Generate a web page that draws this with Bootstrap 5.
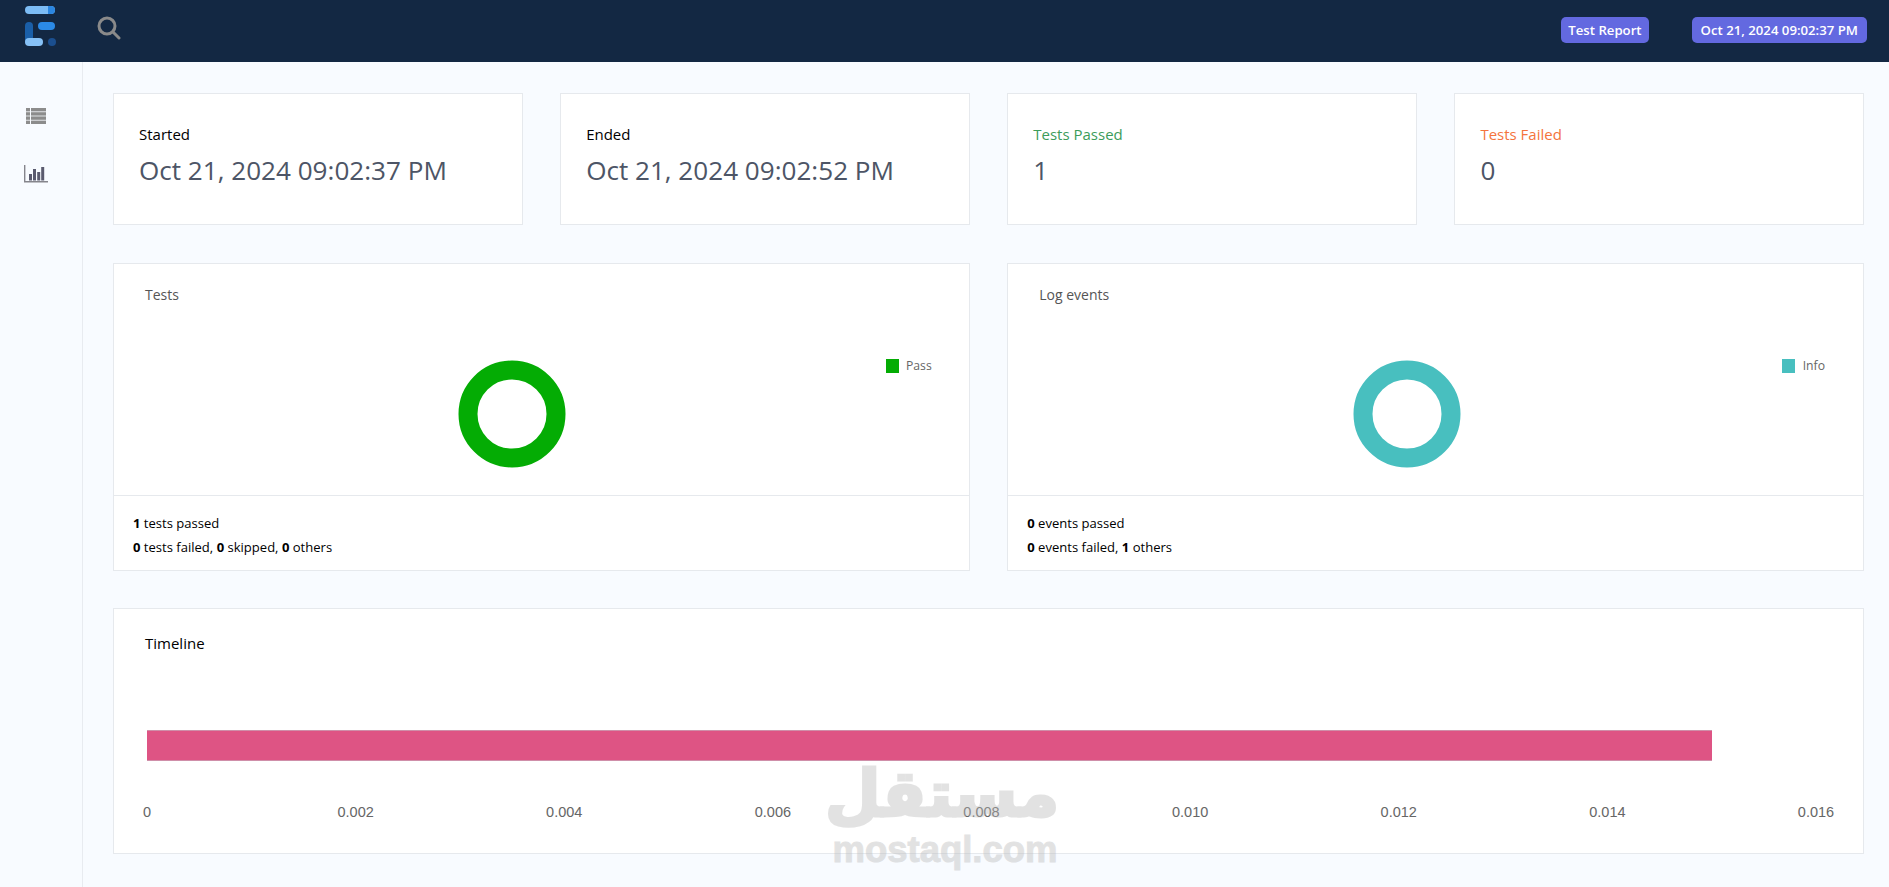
<!DOCTYPE html>
<html lang="en">
<head>
  <meta charset="utf-8" />
  <meta name="viewport" content="width=device-width, initial-scale=1.0" />
  <title>Test Report</title>
  <link href="https://cdn.jsdelivr.net/npm/bootstrap@5.3.2/dist/css/bootstrap.min.css" rel="stylesheet" />
  <style>
    body {
      background-color: #f8fbff;
      font-family: "Open Sans", sans-serif;
      color: #000;
      height: 887px;
      overflow: hidden;
    }

    .top-bar {
      height: 62px;
      background-color: #132843;
      padding: 0 22px 0 25px;
    }

    .top-bar .logo-svg {
      margin-top: -8px;
    }

    .top-bar .search-svg {
      margin-left: 40px;
      margin-top: -7px;
    }

    .top-pill {
      background-color: #6369e0;
      border-radius: 5px;
      font-size: 13.2px;
      font-weight: 600;
      line-height: 26px;
      padding: 0 9px;
      margin-top: -2px;
      margin-left: 42px;
      color: #fff;
    }

    .top-pill.pill-short {
      padding: 0 7px;
      margin-right: 1px;
    }

    .side-bar {
      width: 83px;
      height: 825px;
      border-right: 1px solid #e8ebf0;
      padding: 46px 11px 0 0;
      gap: 41px;
    }

    .report-main {
      padding: 31px 25px 0 30px;
    }

    .report-row {
      --bs-gutter-x: 37.5px;
      --bs-gutter-y: 37.5px;
    }

    .report-card {
      --bs-card-border-color: #e6e9ed;
      border-radius: 0;
    }

    .stat-card {
      height: 132px;
      padding: 29px 25px 0;
    }

    .stat-label {
      font-size: 15px;
      line-height: 22px;
    }

    .stat-value {
      font-size: 26.1px;
      line-height: 36px;
      margin-top: 7px;
      color: #4d5566;
    }

    .text-passed { color: #3c9c5a; }
    .text-failed { color: #f4743c; }

    .chart-body {
      height: 231px;
      padding: 21px 37px 0 0;
    }

    .chart-title {
      font-size: 14px;
      line-height: 20px;
      color: #555;
      padding-left: 31px;
      margin-bottom: 53px;
    }

    .donut-svg {
      margin-left: 344px;
      margin-top: 2px;
    }

    .donut-svg.donut-log {
      margin-left: 345px;
    }

    .legend-box {
      font-size: 12.2px;
      line-height: 14px;
      color: #666;
      gap: 7px;
      margin-top: 1px;
    }

    .legend-box.legend-log {
      gap: 8px;
      margin-right: 1px;
    }

    .legend-box i {
      display: block;
      width: 13px;
      height: 14px;
    }

    .chart-foot {
      --bs-card-cap-bg: #fff;
      --bs-card-cap-padding-x: 19px;
      --bs-card-cap-padding-y: 0;
      height: 75px;
      padding-top: 15px;
      border-radius: 0 !important;
      font-size: 13.05px;
      line-height: 24px;
    }

    .timeline-card {
      height: 246px;
    }

    .timeline-title {
      font-size: 15px;
      line-height: 22px;
      padding: 23px 0 0 31px;
      margin-bottom: 76px;
    }

    .timeline-plot {
      padding: 0 47px 0 33px;
    }

    .timeline-bar {
      height: 31px;
      background-color: #de5484;
      border-top: 1px solid #cf8fa9;
      border-bottom: 1px solid #cf8fa9;
    }

    .timeline-ticks {
      margin-top: 41px;
      font-family: "Liberation Sans", Arial, sans-serif;
      font-size: 14.5px;
      line-height: 20px;
      color: #666;
    }

    .timeline-ticks span {
      width: 0;
      display: flex;
      justify-content: center;
      white-space: nowrap;
    }

    /* filigrane mostaql par dessus la page */
    .wm-mark {
      position: absolute;
      left: 831px;
      top: 752px;
      width: 228px;
      color: #b9b9b9;
      opacity: 0.4;
      text-align: center;
      font-weight: 700;
      pointer-events: none;
    }

    .wm-ar {
      font-family: "DejaVu Sans", sans-serif;
      font-size: 64px;
      line-height: 84px;
      padding-right: 0;
      padding-left: 10px;
      -webkit-text-stroke: 3px #b9b9b9;
    }

    .wm-en {
      font-family: "Liberation Sans", Arial, sans-serif;
      font-size: 36.5px;
      line-height: 36px;
      margin-top: -4px;
      -webkit-text-stroke: 1px #b9b9b9;
    }
  </style>
</head>
<body>
  <!-- barre du haut -->
  <nav class="top-bar d-flex align-items-center">
    <svg class="logo-svg" width="32" height="42" viewBox="0 0 32 42">
      <rect x="0" y="0" width="30" height="8" rx="4" fill="#7cbcf5" />
      <path d="M23 0h3a4 4 0 0 1 0 8h-3z" fill="#2b86e0" />
      <rect x="13" y="16" width="17" height="8" rx="4" fill="#2b8ae6" />
      <rect x="0" y="16" width="8" height="22" rx="4" fill="#1a5fa8" />
      <rect x="0" y="32" width="18" height="8" rx="4" fill="#86c1f6" />
      <circle cx="27" cy="36" r="4" fill="#1b4f8f" />
    </svg>
    <svg class="search-svg" width="24" height="24" viewBox="0 0 24 24" fill="none" stroke="#8a8a8a" stroke-width="3">
      <circle cx="10" cy="10" r="8" />
      <path d="M16 16l6 6" stroke-linecap="round" />
    </svg>
    <span class="ms-auto top-pill pill-short">Test Report</span>
    <span class="top-pill">Oct 21, 2024 09:02:37 PM</span>
  </nav>

  <div class="d-flex">
    <aside class="side-bar d-flex flex-column align-items-center flex-shrink-0">
      <svg width="20" height="16" viewBox="0 0 20 16" fill="#8c8c8c">
        <rect x="0" y="0" width="4" height="3.4" />
        <rect x="5" y="0" width="15" height="3.4" />
        <rect x="0" y="4.2" width="4" height="3.4" />
        <rect x="5" y="4.2" width="15" height="3.4" />
        <rect x="0" y="8.4" width="4" height="3.4" />
        <rect x="5" y="8.4" width="15" height="3.4" />
        <rect x="0" y="12.6" width="4" height="3.4" />
        <rect x="5" y="12.6" width="15" height="3.4" />
      </svg>
      <svg width="24" height="18" viewBox="0 0 24 18">
        <path d="M.7 0v16.7H24" fill="none" stroke="#85858c" stroke-width="1.4" />
        <g fill="#5a5a6e">
          <rect x="5" y="9" width="3" height="6.5" />
          <rect x="9" y="4" width="3" height="11.5" />
          <rect x="13.2" y="7" width="3" height="8.5" />
          <rect x="17.2" y="2" width="3" height="13.5" />
        </g>
      </svg>
    </aside>

    <main class="report-main flex-grow-1">
      <div class="row report-row">
        <div class="col-3">
          <div class="card report-card stat-card">
            <div class="stat-label">Started</div>
            <div class="stat-value">Oct 21, 2024 09:02:37 PM</div>
          </div>
        </div>
        <div class="col-3">
          <div class="card report-card stat-card">
            <div class="stat-label">Ended</div>
            <div class="stat-value">Oct 21, 2024 09:02:52 PM</div>
          </div>
        </div>
        <div class="col-3">
          <div class="card report-card stat-card">
            <div class="stat-label text-passed">Tests Passed</div>
            <div class="stat-value">1</div>
          </div>
        </div>
        <div class="col-3">
          <div class="card report-card stat-card">
            <div class="stat-label text-failed">Tests Failed</div>
            <div class="stat-value">0</div>
          </div>
        </div>

        <div class="col-6">
          <div class="card report-card">
            <div class="chart-body">
              <div class="chart-title">Tests</div>
              <div class="d-flex justify-content-between align-items-start">
                <svg class="donut-svg" width="108" height="108" viewBox="0 0 108 108">
                  <circle cx="54" cy="54" r="44" fill="none" stroke="#04ac04" stroke-width="19" />
                </svg>
                <div class="legend-box d-flex"><i style="background:#04ac04"></i>Pass</div>
              </div>
            </div>
            <div class="card-footer chart-foot">
              <div><b>1</b> tests passed</div>
              <div><b>0</b> tests failed, <b>0</b> skipped, <b>0</b> others</div>
            </div>
          </div>
        </div>
        <div class="col-6">
          <div class="card report-card">
            <div class="chart-body">
              <div class="chart-title">Log events</div>
              <div class="d-flex justify-content-between align-items-start">
                <svg class="donut-svg donut-log" width="108" height="108" viewBox="0 0 108 108">
                  <circle cx="54" cy="54" r="44" fill="none" stroke="#48bfbf" stroke-width="19" />
                </svg>
                <div class="legend-box legend-log d-flex"><i style="background:#48bfbf"></i>Info</div>
              </div>
            </div>
            <div class="card-footer chart-foot">
              <div><b>0</b> events passed</div>
              <div><b>0</b> events failed, <b>1</b> others</div>
            </div>
          </div>
        </div>

        <div class="col-12">
          <div class="card report-card timeline-card">
            <div class="timeline-title">Timeline</div>
            <div class="timeline-plot">
              <div class="timeline-bar" style="width:93.75%"></div>
              <div class="timeline-ticks d-flex justify-content-between">
                <span>0</span><span>0.002</span><span>0.004</span><span>0.006</span><span>0.008</span>
                <span>0.010</span><span>0.012</span><span>0.014</span><span>0.016</span>
              </div>
            </div>
          </div>
        </div>
      </div>
    </main>
  </div>

  <div class="wm-mark">
    <div class="wm-ar" dir="rtl">مستقل</div>
    <div class="wm-en">mostaql.com</div>
  </div>

  <script src="https://cdn.jsdelivr.net/npm/bootstrap@5.3.2/dist/js/bootstrap.bundle.min.js"></script>
</body>
</html>
